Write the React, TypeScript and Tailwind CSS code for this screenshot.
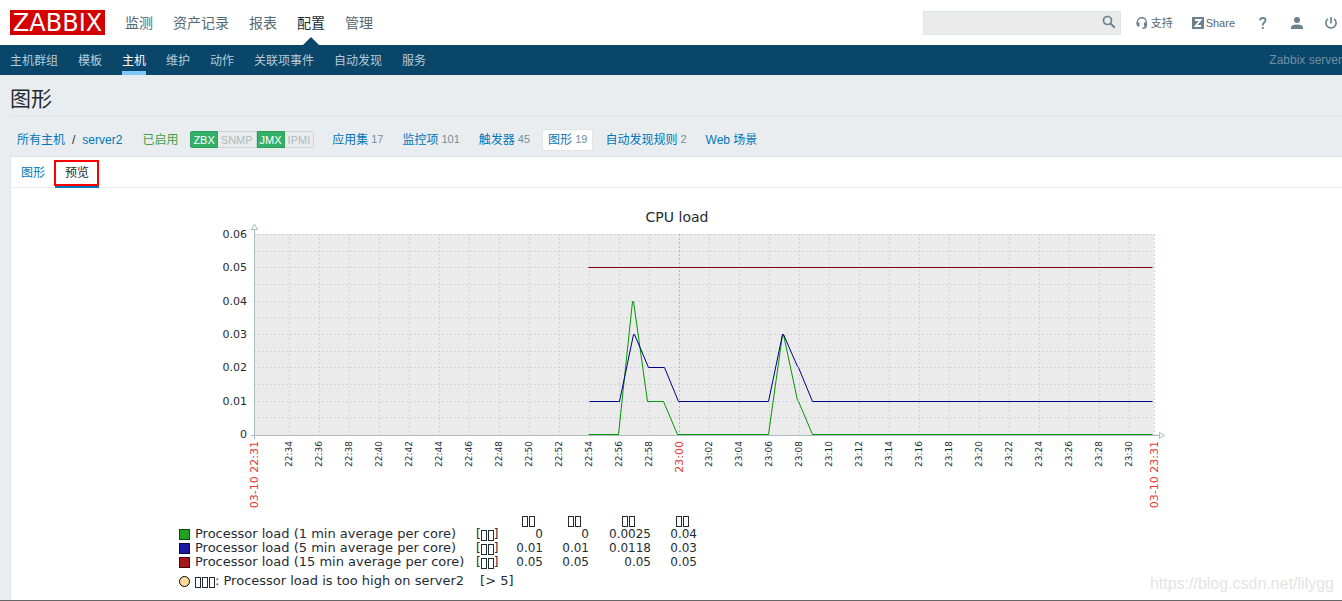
import React from "react";

type Point = [number, number];

const mainMenu = ["监测", "资产记录", "报表", "配置", "管理"];
const subMenu = ["主机群组", "模板", "主机", "维护", "动作", "关联项事件", "自动发现", "服务"];

const interfaces = [
  { name: "ZBX", on: true },
  { name: "SNMP", on: false },
  { name: "JMX", on: true },
  { name: "IPMI", on: false },
];

const hostLinks = [
  { name: "应用集", count: 17 },
  { name: "监控项", count: 101 },
  { name: "触发器", count: 45 },
  { name: "图形", count: 19, active: true },
  { name: "自动发现规则", count: 2 },
  { name: "Web 场景" },
];

const legend = [
  { color: "bg-[#1fa31f] border-[#0d440d]", name: "Processor load (1 min average per core)", values: ["0", "0", "0.0025", "0.04"] },
  { color: "bg-[#1a1aa3] border-[#0a0a44]", name: "Processor load (5 min average per core)", values: ["0.01", "0.01", "0.0118", "0.03"] },
  { color: "bg-[#a31a1a] border-[#440a0a]", name: "Processor load (15 min average per core)", values: ["0.05", "0.05", "0.05", "0.05"] },
];

// plot area
const LEFT = 78;
const RIGHT = 978;
const TOP = 30;
const BOTTOM = 231;

const yLabels = ["0.06", "0.05", "0.04", "0.03", "0.02", "0.01", "0"];
const rows = [30, 47, 63, 80, 97, 113, 130, 147, 163, 180, 197, 213];

// one tick every two minutes, 22:34 - 23:30
const ticks = Array.from({ length: 29 }, (_, i) => {
  const minutes = 22 * 60 + 34 + i * 2;
  const label = `${Math.floor(minutes / 60)}:${String(minutes % 60).padStart(2, "0")}`;
  return { x: 113 + i * 30, label };
});

const load1: Point[] = [[412, 230], [442, 230], [456, 97], [457, 97], [471, 197], [487, 197], [501, 230], [592, 230], [606, 130], [607, 130], [621, 196], [622, 197], [636, 230], [976, 230]];
const load5: Point[] = [[413, 197], [443, 197], [457, 130], [458, 130], [472, 163], [488, 163], [502, 197], [592, 197], [606, 130], [607, 130], [621, 162], [622, 163], [636, 197], [976, 197]];
const load15: Point[] = [[412, 63], [976, 63]];

const toPoints = (list: Point[]) => list.map(([x, y]) => `${x + 0.5},${y + 0.5}`).join(" ");

const Missing = ({ count }: { count: number }) => (
  <span className="inline-flex gap-px align-[-3px]">
    {Array.from({ length: count }, (_, i) => (
      <span key={i} className="h-[11px] w-[6px] border border-[#1f2c33]" />
    ))}
  </span>
);

const Header = () => (
  <header className="flex h-[45px] items-center bg-white pl-[10px]">
    <a href="#" className="flex h-[25px] w-[95px] items-center justify-center bg-[#d40000] font-['DejaVu_Sans',sans-serif] text-[24px] leading-none text-white">
      ZABBIX
    </a>
    <nav className="ml-5 flex h-full gap-5 text-sm">
      {mainMenu.map((item) => (
        <a key={item} href="#" className={item === "配置" ? "relative flex items-center text-[#1f2c33]" : "flex items-center text-[#566872]"}>
          {item}
          {item === "配置" && (
            <svg className="absolute bottom-0 left-1/2 -translate-x-1/2" width="16" height="8" viewBox="0 0 16 8">
              <path d="M0 8L8 0L16 8Z" fill="#0a466a" />
            </svg>
          )}
        </a>
      ))}
    </nav>
    <form className="relative ml-auto">
      <input type="text" aria-label="搜索" className="block h-6 w-[198px] border border-[#dfe4e7] bg-[#ebebeb] pr-7 pl-1 text-xs outline-none" />
      <button type="button" aria-label="查找" className="absolute top-1 right-[5px]">
        <svg width="14" height="14" viewBox="0 0 14 14" fill="none" stroke="#69808d">
          <circle cx="5.5" cy="5.5" r="4" strokeWidth="1.7" />
          <path d="M8.4 8.4L12.8 12.8" strokeWidth="2" />
        </svg>
      </button>
    </form>
    <div className="flex items-center pr-[5px] text-[11px] text-[#566872]">
      <a href="#" className="ml-[15px] flex items-center gap-[3px]">
        <svg width="12" height="12" viewBox="0 0 12 12" fill="#69808d">
          <path d="M1.3 7V5.1A4.5 4.4 0 0 1 10.3 5.1V8Q10.3 11.2 6.5 11.2" fill="none" stroke="#69808d" strokeWidth="1.4" />
          <path d="M.6 5.5H3.5V9.6H2.3Q.6 9.4 .6 7.5ZM8 5.5H11V8Q11 9.6 9.5 9.6H8Z" />
        </svg>
        <span className="pt-px">支持</span>
      </a>
      <a href="#" className="ml-[19px] flex items-center gap-[2px]">
        <svg width="12" height="12" viewBox="0 0 12 12">
          <path d="M0 0H12V12H0Z" fill="#69808d" />
          <path d="M3 3H8.6L3.6 9H9.2" fill="none" stroke="#fff" strokeWidth="1.8" />
        </svg>
        <span className="pt-px">Share</span>
      </a>
      <a href="#" aria-label="帮助" className="ml-6">
        <svg width="8" height="12" viewBox="0 0 8 12" fill="none" stroke="#69808d" strokeWidth="1.8">
          <path d="M1 3.3Q1.2 1 3.8 1T6.6 3.3Q6.6 4.5 5.2 5.5T3.8 8.4" />
          <path d="M2.9 11H4.7" strokeWidth="2" />
        </svg>
      </a>
      <a href="#" aria-label="用户" className="ml-6">
        <svg width="12" height="12" viewBox="0 0 12 12" fill="#69808d">
          <circle cx="6" cy="3" r="3" />
          <path d="M0 12V10.5Q0 7.5 6 7.5T12 10.5V12Z" />
        </svg>
      </a>
      <a href="#" aria-label="退出" className="ml-[22px]">
        <svg width="12" height="12" viewBox="0 0 12 12" fill="none" stroke="#69808d" strokeWidth="1.6">
          <path d="M6 0V6.4" />
          <path d="M3 1.8A5.1 5.1 0 1 0 9 1.8" />
        </svg>
      </a>
    </div>
  </header>
);

const SubNav = () => (
  <nav className="flex h-[30px] items-stretch gap-5 overflow-hidden bg-[#0a466a] pl-[10px] text-xs whitespace-nowrap text-[#b5cbd8]">
    {subMenu.map((item) => (
      <a key={item} href="#" className={item === "主机" ? "flex items-center border-b-4 border-[#7fc6f8] pt-[6px] text-white" : "flex items-center pt-[2px]"}>
        {item}
      </a>
    ))}
    <span className="ml-auto flex items-center text-[#6c8fa4]">Zabbix server</span>
  </nav>
);

const HostBar = () => (
  <div className="flex h-[39px] items-center pt-[6px] pl-[7px] text-xs text-[#0275b8]">
    <a href="#">所有主机</a>
    <span className="mx-[7px] text-[#1f2c33]">/</span>
    <a href="#">server2</a>
    <span className="ml-5 text-[#429e47]">已启用</span>
    <div className="ml-3 flex text-[11px] leading-[14px]">
      {interfaces.map(({ name, on }) => (
        <span key={name} className={on ? "border border-[#2f9f5e] bg-[#34af67] px-[2px] pt-px text-white first:rounded-l-xs" : "border border-l-0 border-[#ccd5d9] bg-[#ebebeb] px-[3px] pt-px text-[#acbbc2] last:rounded-r-xs"}>
          {name}
        </span>
      ))}
    </div>
    <nav className="ml-[11px] flex gap-[5px]">
      {hostLinks.map(({ name, count, active }) => (
        <a key={name} href="#" className={active ? "flex h-[22px] items-center gap-[3px] rounded-xs border border-[#dfe4e7] bg-white px-[5px]" : "flex h-[22px] items-center gap-[3px] px-[7px]"}>
          {name}
          {count && <span className="text-[11px] text-[#768d99]">{count}</span>}
        </a>
      ))}
    </nav>
  </div>
);

const Chart = () => (
  <svg className="mt-4 block w-full" viewBox="0 0 1001 308" fontFamily="'DejaVu Sans', sans-serif" fill="#1f2c33">
    <text x="501" y="18" fontSize="14" textAnchor="middle">CPU load</text>
    <rect x={LEFT} y={TOP} width={RIGHT - LEFT} height={BOTTOM - TOP} fill="#ebebeb" />
    <g stroke="#ccd5d9" strokeDasharray="2 2" shapeRendering="crispEdges">
      {rows.map((y) => (
        <line key={y} x1={LEFT} x2={RIGHT} y1={y + 0.5} y2={y + 0.5} />
      ))}
      {ticks.map(({ x, label }) => (
        <line key={label} x1={x + 0.5} x2={x + 0.5} y1={TOP} y2={BOTTOM} stroke={label === "23:00" ? "#acbbc2" : "#ccd5d9"} />
      ))}
      <line x1={RIGHT + 0.5} x2={RIGHT + 0.5} y1={TOP} y2={BOTTOM} />
    </g>
    <g stroke="#acbbc2" fill="white">
      <path d="M78.5 26V235M75 231.5H984" />
      <path d="M75.5 25.5H81.5L78.5 20Z" />
      <path d="M983.5 228.5V234.5L988.5 231.5Z" />
    </g>
    {yLabels.map((label, i) => (
      <text key={label} x="71" y={rows[i * 2] ? rows[i * 2] + 4 : 234} fontSize="11" textAnchor="end">
        {label}
      </text>
    ))}
    {ticks.map(({ x, label }) => (
      <text key={label} transform={`translate(${x + (label === "23:00" ? 4 : 3)} 237) rotate(-90)`} fontSize={label === "23:00" ? 11 : 9} fill={label === "23:00" ? "#e33734" : "#1f2c33"} textAnchor="end">
        {label}
      </text>
    ))}
    <g fill="#e33734" fontSize="11" textAnchor="end">
      <text transform="translate(82 237) rotate(-90)">03-10 22:31</text>
      <text transform="translate(982 237) rotate(-90)">03-10 23:31</text>
    </g>
    <g fill="none">
      <polyline points={toPoints(load1)} stroke="#009900" />
      <polyline points={toPoints(load5)} stroke="#000088" />
      <polyline points={toPoints(load15)} stroke="#880000" />
    </g>
  </svg>
);

const Legend = () => (
  <div className="mt-px ml-[3px] font-['DejaVu_Sans',sans-serif] text-[13px] leading-[14px] text-[#1f2c33]">
    <table className="w-[518px] table-fixed">
      <colgroup>
        <col className="w-[297px]" />
        <col className="w-[22px]" />
        <col className="w-[45px]" />
        <col className="w-[46px]" />
        <col className="w-[62px]" />
        <col className="w-[46px]" />
      </colgroup>
      <thead>
        <tr className="h-[13px] leading-[13px]">
          <td />
          <td />
          {[0, 1, 2, 3].map((i) => (
            <th key={i} className="p-0 pl-4 text-center font-normal"><Missing count={2} /></th>
          ))}
        </tr>
      </thead>
      <tbody>
        {legend.map(({ color, name, values }) => (
          <tr key={name} className="h-[14px] whitespace-nowrap">
            <td className="p-0">
              <span className="flex h-[14px] items-center gap-[5px]">
                <span className={`size-[11px] border ${color}`} />
                {name}
              </span>
            </td>
            <td className="p-0 text-xs leading-[14px]"><span className="flex h-[14px] items-end">[<Missing count={2} />]</span></td>
            {values.map((value, i) => (
              <td key={i} className="p-0 text-right text-xs leading-[14px]">{value}</td>
            ))}
          </tr>
        ))}
      </tbody>
    </table>
    <p className="mt-[5px] flex items-center">
      <svg width="11" height="11" viewBox="0 0 11 11">
        <circle cx="5.5" cy="5.5" r="5" fill="#ffdb99" stroke="#000" />
      </svg>
      <span className="ml-[5px]"><Missing count={3} />: Processor load is too high on server2</span>
      <span className="ml-4">[&gt; 5]</span>
    </p>
  </div>
);

export default function App() {
  return (
    <div className="relative flex min-h-screen flex-col overflow-hidden border-b border-[#666] bg-[#e9edf0] font-['Liberation_Sans','Noto_Sans_CJK_SC',sans-serif] text-[#1f2c33]">
      <Header />
      <SubNav />
      <main className="flex grow flex-col pl-[10px]">
        <h1 className="flex h-[42px] items-center border-b border-[#dfe4e7] pt-[6px] text-[21px]">图形</h1>
        <HostBar />
        <section className="grow border-t border-l border-[#dfe4e7] bg-white">
          <div className="flex h-[31px] border-b border-[#ebeef0] text-xs">
            <a href="#" className="flex items-center px-[10px] pt-[2px] text-[#0275b8]">图形</a>
            <a href="#" className="relative -mb-px flex items-center border-b-3 border-[#0275b8] px-[10px] pt-[3px]">
              预览
              <span className="absolute right-0 top-[3px] -left-px h-[26px] border-2 border-[#f00]" />
            </a>
          </div>
          <div className="mx-auto max-w-[1001px]">
            <Chart />
            <Legend />
          </div>
        </section>
      </main>
      <p className="absolute right-2 bottom-1 text-base text-[#e4e4e4]">https://blog.csdn.net/lilygg</p>
    </div>
  );
}
